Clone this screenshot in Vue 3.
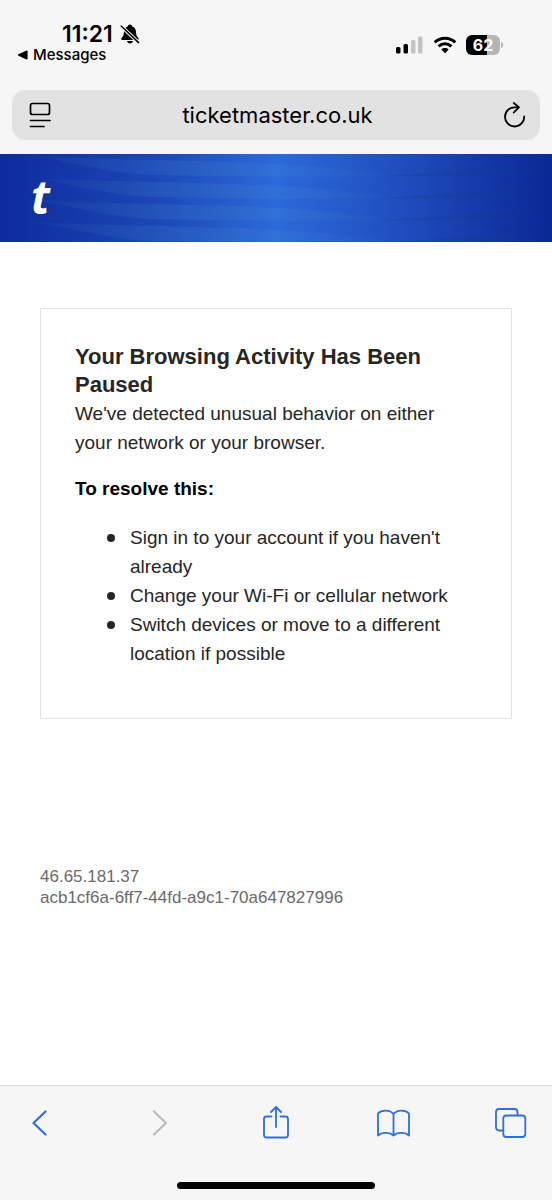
<script setup>
import { ref } from "vue";

const address = ref("ticketmaster.co.uk");
const waveOffsets = [-44, -22, 0, 22, 44, 66];
const steps = [
  "Sign in to your account if you haven't already",
  "Change your Wi-Fi or cellular network",
  "Switch devices or move to a different location if possible",
];
const clientIp = "46.65.181.37";
const requestId = "acb1cf6a-6ff7-44fd-a9c1-70a647827996";
</script>

<template>
  <div class="screen">
    <div class="status">
      <div class="status-left">
        <div class="clock">
          <span>11:21</span>
          <svg width="20" height="20" viewBox="0 0 20 20" aria-hidden="true">
            <path
              d="M10 0.6c1.3 0 2.1.8 2.3 1.9 2.4.9 3.6 2.9 3.7 5.4.1 3.2.8 4.4 2.3 6 .8.9.4 2-.8 2H2.4c-1.2 0-1.6-1.100-.8-2 1.500-1.600 2.200-2.800 2.300-6 .1-2.500 1.400-4.500 3.800-5.400C7.900 1.400 8.700.6 10 .6zM7 17h6c-.3 1.500-1.500 2.400-3 2.400S7.300 18.500 7 17z"
            />
            <path d="M1 2l18 17" stroke="#f6f6f6" stroke-width="3.400" />
            <path
              d="M1.200 2l17.400 16.600"
              stroke="#000"
              stroke-width="1.500"
              stroke-linecap="round"
            />
          </svg>
        </div>
        <a class="back-app" href="#">
          <svg width="10" height="10" viewBox="0 0 10 10" aria-hidden="true">
            <path d="M0.500 4.300 8.500.6c.7-.3 1.100 0 1.100.6v7.600c0 .6-.4.9-1.100.6L.5 5.700c-.6-.3-.6-1.100 0-1.400z" />
          </svg>
          <span>Messages</span>
        </a>
      </div>
      <div class="status-right">
        <svg width="28" height="18" viewBox="0 0 28 18" aria-hidden="true">
          <rect x="0" y="11" width="4.500" height="6.500" rx="1.500" />
          <rect x="7.500" y="8" width="4.500" height="9.500" rx="1.500" />
          <rect x="15" y="4" width="4.500" height="13.500" rx="1.500" fill="#c3c3c3" />
          <rect x="22" y="0.500" width="4.500" height="17" rx="1.500" fill="#c3c3c3" />
        </svg>
        <svg width="24" height="18" viewBox="0 0 24 18" aria-hidden="true">
          <g fill="none" stroke="#000" stroke-width="3">
            <path d="M1.700 6.300c5.900-5.500 14.700-5.500 20.600 0" />
            <path d="M5.600 10.400c3.700-3.400 9.100-3.400 12.800 0" />
          </g>
          <path d="M12 17.200 8.300 13.500c2.200-1.900 5.200-1.900 7.400 0z" />
        </svg>
        <div class="battery">
          <span class="battery-level">62</span>
          <svg width="3" height="6" viewBox="0 0 3 6" aria-hidden="true">
            <path d="M0 0c3 1 3 5 0 6z" fill="#b5b5b5" />
          </svg>
        </div>
      </div>
    </div>

    <div class="address-row">
      <div class="address">
        <button type="button" aria-label="Page settings">
          <svg width="24" height="26" viewBox="0 0 24 26" aria-hidden="true">
            <g fill="none" stroke="#000" stroke-width="1.700" stroke-linecap="round">
              <rect x="2.500" y="1.500" width="19" height="11" rx="2" />
              <path d="M2.500 18.500h19.500M2.500 24.500h13.500" />
            </g>
          </svg>
        </button>
        <input v-model="address" type="text" aria-label="Address" />
        <button type="button" aria-label="Reload">
          <svg width="24" height="26" viewBox="0 0 24 26" aria-hidden="true">
            <g
              fill="none"
              stroke="#000"
              stroke-width="1.800"
              stroke-linecap="round"
              stroke-linejoin="round"
            >
              <path d="M15.500 5.300H12A9.600 9.600 0 1 0 21.200 14.500" />
              <path d="M10.800 1 15.800 5.300l-5 5.200" />
            </g>
          </svg>
        </button>
      </div>
    </div>

    <header class="brand">
      <svg
        class="waves"
        viewBox="0 0 552 88"
        preserveAspectRatio="none"
        aria-hidden="true"
      >
        <defs>
          <linearGradient id="light" x1="0" x2="1" y1="0" y2="0">
            <stop offset="0" stop-color="#4a9bc0" stop-opacity="0.020" />
            <stop offset="0.400" stop-color="#4a9bc0" stop-opacity="0.160" />
            <stop offset="0.700" stop-color="#4a9bc0" stop-opacity="0.140" />
            <stop offset="1" stop-color="#4a9bc0" stop-opacity="0.020" />
          </linearGradient>
          <linearGradient id="dark" x1="0" x2="1" y1="0" y2="0">
            <stop offset="0" stop-color="#103c78" stop-opacity="0.300" />
            <stop offset="1" stop-color="#103c78" stop-opacity="0.050" />
          </linearGradient>
        </defs>
        <g v-for="y in waveOffsets" :key="y" :transform="`translate(0 ${y})`">
          <path
            d="M0 22C60 24 100 41 150 43C210 44 330 46 400 44C350 37 300 33 276 32C200 28 90 28 0 22z"
            fill="url(#light)"
          />
          <path
            d="M376 44C430 42 500 38 552 24V44C500 43 430 45 376 44z"
            fill="url(#dark)"
          />
        </g>
      </svg>
      <a class="logo" href="#" aria-label="Ticketmaster">t</a>
    </header>

    <main class="content">
      <section class="card">
        <h1>Your Browsing Activity Has Been Paused</h1>
        <p>We've detected unusual behavior on either your network or your browser.</p>
        <h2>To resolve this:</h2>
        <ul>
          <li v-for="step in steps" :key="step">{{ step }}</li>
        </ul>
      </section>
      <div class="trace">
        <div>{{ clientIp }}</div>
        <div>{{ requestId }}</div>
      </div>
    </main>

    <footer class="toolbar">
      <nav class="tools">
        <button type="button" aria-label="Back">
          <svg width="32" height="34" viewBox="0 0 32 34" aria-hidden="true">
            <path d="M20.500 5.500 8.500 17l12 11.500" stroke-width="2.200" />
          </svg>
        </button>
        <button type="button" aria-label="Forward" disabled>
          <svg width="32" height="34" viewBox="0 0 32 34" aria-hidden="true">
            <path d="M12 5.500 24 17 12 28.500" stroke-width="2.200" />
          </svg>
        </button>
        <button type="button" aria-label="Share">
          <svg width="32" height="34" viewBox="0 0 32 34" aria-hidden="true">
            <path d="M12.500 10.500H7.500A2.500 2.500 0 0 0 5 13v16a2.500 2.500 0 0 0 2.500 2.500h19A2.500 2.500 0 0 0 29 29V13a2.500 2.500 0 0 0-2.500-2.500H21.500" />
            <path d="M17 21V1.500M12 6l5-5 5 5" />
          </svg>
        </button>
        <button type="button" aria-label="Bookmarks">
          <svg width="34" height="34" viewBox="0 0 34 34" aria-hidden="true">
            <path d="M17.500 8C14 3.500 5.500 3.500 2 7.500V29.500C5.500 26 14 26 17.500 29.500 21 26 29.500 26 33 29.500V7.500C29.500 3.500 21 3.500 17.500 8zV29.500" />
          </svg>
        </button>
        <button type="button" aria-label="Tabs">
          <svg width="32" height="34" viewBox="0 0 32 34" aria-hidden="true">
            <path d="M8 24.500H4A3 3 0 0 1 1 21.500V6a3 3 0 0 1 3-3H19.500a3 3 0 0 1 3 3v3.500" />
            <rect x="8.300" y="9.500" width="22" height="21.500" rx="3" />
          </svg>
        </button>
      </nav>
      <div class="home-bar"></div>
    </footer>
  </div>
</template>

<style>
body {
  margin: 0;
  background: #fff;
}
</style>

<style scoped>
.screen {
  display: flex;
  flex-direction: column;
  min-height: 100vh;
  font-family: "Liberation Sans", Arial, sans-serif;
  color: #262626;
}
svg {
  display: block;
}
button {
  display: flex;
  padding: 0;
  border: 0;
  background: none;
  cursor: pointer;
}
.status {
  display: flex;
  justify-content: space-between;
  height: 90px;
  box-sizing: border-box;
  padding: 22px 48px 0 18px;
  background: #f6f6f6;
  color: #000;
  font-family: Inter, sans-serif;
}
.clock {
  display: flex;
  align-items: center;
  gap: 7px;
  padding-left: 44px;
  font-size: 23px;
  font-weight: 600;
  line-height: 24px;
}
.back-app {
  display: flex;
  align-items: center;
  gap: 5px;
  color: #000;
  font-size: 15px;
  font-weight: 500;
  line-height: 18px;
  text-decoration: none;
}
.status-right {
  display: flex;
  align-items: center;
  gap: 9px;
  height: 46px;
}
.battery {
  display: flex;
  align-items: center;
  gap: 1px;
}
.battery-level {
  width: 34px;
  border-radius: 6px;
  background: linear-gradient(90deg, #000 63%, #b5b5b5 63%);
  color: #fff;
  font-size: 16px;
  font-weight: 700;
  line-height: 20px;
  text-align: center;
}
.address-row {
  padding: 0 12px 14px;
  background: #f6f6f6;
}
.address {
  display: flex;
  align-items: center;
  height: 50px;
  padding: 0 13px 0 16px;
  border-radius: 13px;
  background: #e2e2e2;
}
.address input {
  flex: 1;
  min-width: 0;
  padding: 0;
  border: 0;
  outline: 0;
  background: none;
  color: #000;
  font-family: Inter, sans-serif;
  font-size: 22px;
  line-height: 28px;
  text-align: center;
}
.brand {
  position: relative;
  display: flex;
  align-items: center;
  height: 88px;
  padding: 0 31px;
  background: linear-gradient(90deg, #0e2b9b, #1b45b6 27%, #2c69da 50%, #1f4dbe 73%, #0b2796);
}
.waves {
  position: absolute;
  inset: 0;
  width: 100%;
  height: 100%;
}
.logo {
  position: relative;
  padding-bottom: 4px;
  color: #fff;
  font-family: "Noto Sans", sans-serif;
  font-size: 46px;
  font-style: italic;
  font-weight: 700;
  line-height: 80px;
  text-decoration: none;
}
.content {
  flex: 1;
  padding: 66px 40px 40px;
}
.card {
  padding: 34px 48px 50px 34px;
  border: 1px solid #e3e3e3;
}
h1,
h2,
p,
ul {
  margin: 0;
}
h1 {
  font-size: 22px;
  line-height: 28px;
}
p,
h2,
li {
  font-size: 19px;
  line-height: 29px;
}
h2 {
  margin: 17px 0 20px;
  color: #000;
}
ul {
  padding: 0 0 0 32px;
  list-style: none;
}
li {
  display: flex;
  gap: 15px;
}
li::before {
  flex: none;
  width: 8px;
  height: 8px;
  margin-top: 11px;
  border-radius: 50%;
  background: #262626;
  content: "";
}
.trace {
  margin-top: 147px;
  color: #6a6a6a;
  font-size: 17px;
  line-height: 21px;
}
.toolbar {
  height: 114px;
  border-top: 1px solid #dcdcdc;
  background: #f6f6f6;
}
.tools {
  display: flex;
  justify-content: space-between;
  padding: 20px 25px 0;
}
.tools svg {
  fill: none;
  stroke: #2f6fe0;
  stroke-width: 1.8px;
  stroke-linecap: round;
  stroke-linejoin: round;
}
.tools button:disabled svg {
  stroke: #bcbcbc;
}
.home-bar {
  width: 36%;
  height: 7px;
  margin: 42px auto 0;
  border-radius: 4px;
  background: #000;
}
</style>
